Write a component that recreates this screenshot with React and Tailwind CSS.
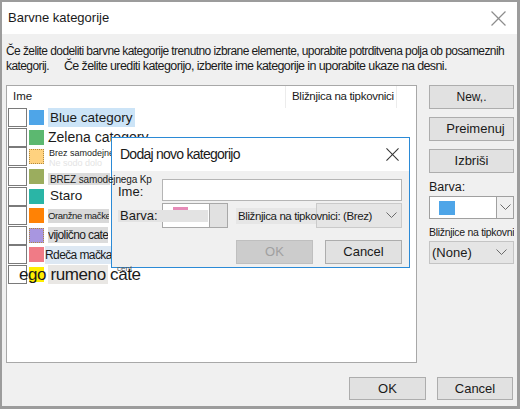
import React from "react";

const Chevron = ({ className = "" }) => (
  <svg width="11" height="7" viewBox="0 0 11 7" className={className}>
    <polyline points="0.5,0.5 5.5,5.5 10.5,0.5" fill="none" stroke="#6b6b6b" strokeWidth="1" />
  </svg>
);

const CloseX = ({ size = 14, color = "#8a8a8a" }) => (
  <svg width={size} height={size} viewBox="0 0 14 14">
    <line x1="0.5" y1="0.5" x2="13.5" y2="13.5" stroke={color} strokeWidth="1.1" />
    <line x1="13.5" y1="0.5" x2="0.5" y2="13.5" stroke={color} strokeWidth="1.1" />
  </svg>
);

function Row({ color, dotted, children }) {
  return (
    <div className="flex items-center h-[19.6px] pl-[1px]">
      <div className="w-[19px] h-[19px] border border-[#7a7a7a] bg-white shrink-0" />
      <div
        className={
          "ml-[2px] w-[15px] h-[15px] shrink-0 " +
          (dotted ? "border border-dotted border-[#b08a40]" : "")
        }
        style={{ background: color }}
      />
      <div className="ml-[4px] flex items-center h-full">{children}</div>
    </div>
  );
}

export default function App() {
  return (
    <div className="relative w-[520px] h-[409px] bg-[#f0f0f0] border-l-2 border-t-2 border-r-[3px] border-b-[3px] border-[#9c9c9c] flex flex-col font-['Liberation_Sans',sans-serif] text-[#1a1a1a] overflow-hidden">
      {/* title bar */}
      <div className="h-[32px] bg-white flex items-center justify-between pl-[6px] pr-[11px] shrink-0">
        <span className="text-[13px]">Barvne kategorije</span>
        <CloseX size={15} color="#8d8d8d" />
      </div>

      <div className="flex-1 flex flex-col pl-[4px] pr-[3px]">
        {/* description */}
        <div className="pt-[10px] h-[51px] text-[12px] leading-[15px] tracking-[-0.58px] whitespace-nowrap">
          <div>Če želite dodeliti barvne kategorije trenutno izbrane elemente, uporabite potrditvena polja ob posameznih</div>
          <div>
            kategorij.<span className="ml-[15px] text-[12.5px] tracking-[-0.6px]">Če želite urediti kategorijo, izberite ime kategorije in uporabite ukaze na desni.</span>
          </div>
        </div>

        {/* main */}
        <div className="flex gap-[12px]">
          {/* list */}
          <div className="w-[412px] h-[278px] bg-white border border-[#a8a8a8] flex flex-col">
            <div className="h-[22px] flex items-center shrink-0">
              <div className="w-[278px] pl-[6px] text-[11.5px]">Ime</div>
              <div className="h-full flex items-center w-[112px] border-l border-r border-[#ececec] pl-[6px] text-[11.5px] tracking-[-0.3px] whitespace-nowrap">
                Bližnjica na tipkovnici
              </div>
            </div>
            <Row color="#4ea5e8">
              <span className="bg-[#cce4f7] px-[2px] text-[13.5px] leading-[19px]">Blue category</span>
            </Row>
            <Row color="#5cb870">
              <span className="text-[14px] whitespace-nowrap">Zelena category</span>
            </Row>
            <Row color="#ffd27f" dotted>
              <div className="flex flex-col h-full leading-none pl-[1px] pt-[2px]">
                <span className="text-[9px] whitespace-nowrap">Brez samodejnega</span>
                <span className="text-[9px] text-[#e4e4e4] whitespace-nowrap mt-[1px]">Ne sodo dolo</span>
              </div>
            </Row>
            <Row color="#9bad5e">
              <div className="relative z-20 bg-[#dcdcdc] w-[62px] h-[12px] mt-[5px] flex items-center">
                <span className="text-[10px] tracking-[-0.15px] whitespace-nowrap pl-[2px]">BREZ samodejnega Kp</span>
              </div>
            </Row>
            <Row color="#2ab5a6">
              <span className="text-[13.5px] pl-[2px]">Staro</span>
            </Row>
            <Row color="#ff8205">
              <div className="bg-[#d9d9d9] w-[61px] h-[14px] flex items-center overflow-hidden">
                <span className="text-[9.5px] tracking-[-0.35px] whitespace-nowrap">Oranžne mačke</span>
              </div>
            </Row>
            <Row color="#a896e0" dotted>
              <div className="bg-[#dcdcdc] w-[60px] h-[16px] flex items-center overflow-hidden">
                <span className="text-[12px] tracking-[-0.6px] whitespace-nowrap">vijolično categ</span>
              </div>
            </Row>
            <Row color="#f07b86">
              <div className="bg-[#dde8f3] w-[66px] h-[18px] -ml-[3px] flex items-center">
                <span className="text-[12px] tracking-[-0.6px] whitespace-nowrap">Rdeča mačka</span>
              </div>
            </Row>
            <div className="relative">
              <Row color="#ffee00">
                <div className="bg-[#e9e7e4] w-[60px] h-[19px]" />
              </Row>
              <span className="absolute left-[110px] -top-[2px] text-[8px] text-[#555] z-20">cent</span>
              <span className="absolute left-[12px] top-[-2px] text-[17px] leading-[24px] whitespace-nowrap z-20 tracking-[-0.4px]">
                ego rumeno cate
              </span>
            </div>
          </div>

          {/* right column */}
          <div className="w-[85px] flex flex-col">
            <button className="h-[24px] bg-[#e1e1e1] border border-[#adadad] text-[12px]">New,.</button>
            <button className="h-[24px] mt-[8px] bg-[#e1e1e1] border border-[#adadad] text-[13px] pl-[8px]">Preimenuj</button>
            <button className="h-[24px] mt-[8px] bg-[#e1e1e1] border border-[#adadad] text-[13px]">Izbriši</button>
            <div className="text-[12.5px] mt-[7px] leading-[15px]">Barva:</div>
            <div className="h-[23px] mt-[1px] bg-white border border-[#a0a0a0] flex">
              <div className="flex-1 flex items-center pl-[9px]">
                <div className="w-[16px] h-[14px] bg-[#4ea5e8]" />
              </div>
              <div className="w-[17px] border-l border-[#a0a0a0] bg-[#f0f0f0] flex items-center justify-center">
                <Chevron />
              </div>
            </div>
            <div className="text-[10.5px] mt-[7px] leading-[12px] whitespace-nowrap overflow-hidden tracking-[-0.3px]">Bližnjice na tipkovnici:</div>
            <div className="h-[23px] mt-[3px] bg-[#e5e5e5] border border-[#c4c4c4] flex items-center justify-between pl-[2px] pr-[6px]">
              <span className="text-[13px]">(None)</span>
              <Chevron />
            </div>
          </div>
        </div>

        {/* bottom buttons */}
        <div className="flex justify-end gap-[11px] mt-[14px] pr-[1px]">
          <button className="w-[77px] h-[23px] bg-[#e1e1e1] border border-[#adadad] text-[13px]">OK</button>
          <button className="w-[76px] h-[23px] bg-[#e1e1e1] border border-[#adadad] text-[13px]">Cancel</button>
        </div>
      </div>

      {/* overlaid dialog */}
      <div className="absolute left-[109px] top-[135px] w-[299px] h-[131px] border border-[#2b8ad6] bg-[#f0f0f0] flex flex-col z-10">
        <div className="h-[33px] bg-white flex items-center justify-between pl-[8px] pr-[10px] shrink-0">
          <span className="text-[14px] tracking-[-0.75px]">Dodaj novo kategorijo</span>
          <CloseX size={13} color="#333" />
        </div>
        <div className="flex flex-col pt-[8px] pr-[7px]">
          <div className="flex items-center h-[22px]">
            <span className="w-[50px] pl-[6px] pt-[4px] text-[13px]">Ime:</span>
            <div className="flex-1 h-full bg-white border border-[#b5b5b5]" />
          </div>
          <div className="relative flex items-center h-[25px] mt-[2px]">
            <div className="ml-[50px] w-[66px] h-full border border-[#a8a8a8] bg-white flex">
              <div className="flex-1 pl-[10px] pt-[3px]">
                <div className="w-[15px] h-[8px] bg-[#e68bb8]" />
              </div>
              <div className="w-[18px] border-l border-[#a8a8a8] bg-[#e1e1e1]" />
            </div>
            <div className="absolute left-[6px] top-[7px] w-[90px] h-[12px] bg-[#e3e3e3] flex items-center pl-[2px]">
              <span className="text-[13px]">Barva:</span>
            </div>
            <div className="ml-[8px] w-[80px] h-[16px] bg-[#e6e6e6]" />
            <div className="w-[86px] h-full bg-[#e5e5e5] border border-[#cacaca] flex items-center justify-end pr-[4px]">
              <Chevron />
            </div>
            <span className="absolute left-[126px] top-[5px] text-[11.5px] tracking-[-0.4px] whitespace-nowrap">Bližnjica na tipkovnici: (Brez)</span>
          </div>
          <div className="flex justify-end gap-[12px] mt-[12px]">
            <button className="w-[77px] h-[24px] bg-[#cccccc] border border-[#bfbfbf] text-[13px] text-[#a0a0a0]">OK</button>
            <button className="w-[77px] h-[24px] bg-[#e1e1e1] border border-[#adadad] text-[13px]">Cancel</button>
          </div>
        </div>
      </div>
    </div>
  );
}
